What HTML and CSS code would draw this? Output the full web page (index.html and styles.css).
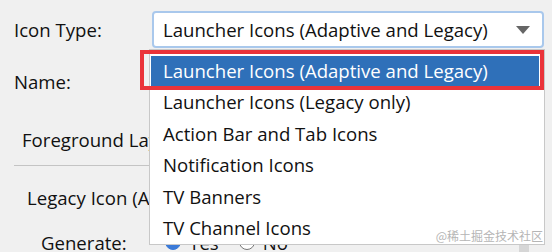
FILE: index.html
```html
<!DOCTYPE html>
<html lang="en">
<head>
    <meta charset="UTF-8">
    <title>Icon Type</title>
    <link rel="stylesheet" href="styles.css">
</head>
<body>

<div class="form">
    <div class="row row-type">
        <span class="label">Icon Type:</span>
        <div class="combo">
            <span class="combo-text">Launcher Icons (Adaptive and Legacy)</span>
            <span class="arrow"></span>
        </div>
    </div>
    <div class="row row-name">
        <span class="label">Name:</span>
    </div>
    <div class="tab">Foreground Layer</div>
    <div class="divider"></div>
    <div class="section">Legacy Icon (API &le; 25)</div>
    <div class="row row-generate">
        <span class="label">Generate:</span>
        <span class="radio checked"></span><span class="radio-label">Yes</span>
        <span class="radio"></span><span class="radio-label">No</span>
    </div>
</div>

<ul class="popup">
    <li class="item selected">Launcher Icons (Adaptive and Legacy)</li>
    <li class="item">Launcher Icons (Legacy only)</li>
    <li class="item">Action Bar and Tab Icons</li>
    <li class="item">Notification Icons</li>
    <li class="item">TV Banners</li>
    <li class="item">TV Channel Icons</li>
</ul>

<div class="highlight"></div>
<div class="scroll-thumb"></div>
<div class="watermark">@稀土掘金技术社区</div>

</body>
</html>
```

FILE: styles.css
```css
body {
    margin: 0;
    width: 552px;
    height: 252px;
    overflow: hidden;
    background: #f0f0f0;
    font-family: "Open Sans", "Noto Sans CJK SC", sans-serif;
    font-size: 18.6px;
    color: #111;
    position: relative;
}

.form {
    padding: 11px 8px 0 14px;
}

.row {
    display: flex;
    align-items: center;
}

.row-type {
    height: 37px;
}

.label {
    width: 138px;
}

.combo {
    flex: 1;
    height: 33px;
    border: 2px solid #a9c8ec;
    border-radius: 4px;
    background: #fff;
    display: flex;
    align-items: center;
    padding: 0 12px 0 9px;
}

.combo-text {
    flex: 1;
}

.arrow {
    width: 0;
    height: 0;
    border-left: 7px solid transparent;
    border-right: 7px solid transparent;
    border-top: 8px solid #666;
}

.row-name {
    margin-top: 18px;
    height: 30px;
}

.tab {
    margin: 29px 0 0 8px;
    height: 30px;
    line-height: 30px;
}

.divider {
    margin-top: 10px;
    width: 140px;
    border-top: 1px solid #c4c4c4;
}

.section {
    margin: 17px 0 0 13px;
    height: 30px;
    line-height: 30px;
}

.row-generate {
    margin: 14px 0 0 27px;
    height: 30px;
}

.row-generate .label {
    width: 124px;
}

.radio {
    width: 14px;
    height: 14px;
    border-radius: 50%;
    border: 1px solid #777;
    background: #fff;
    margin-right: 8px;
}

.radio.checked {
    background: #3b7ad8;
    border-color: #3b7ad8;
}

.radio-label {
    margin-right: 20px;
}

.popup {
    position: absolute;
    left: 149px;
    top: 49px;
    width: 396px;
    height: 196px;
    box-sizing: border-box;
    margin: 0;
    padding: 5px 0 0;
    list-style: none;
    background: #fff;
    border: 1px solid #c8c8c8;
}

.item {
    height: 31.5px;
    line-height: 31px;
    padding-left: 13px;
}

.item.selected {
    margin: 1px 5px 0 1px;
    height: 30px;
    line-height: 30px;
    padding-left: 12px;
    background: #2f70b9;
    color: #fff;
}

.highlight {
    position: absolute;
    left: 140px;
    top: 50px;
    width: 396px;
    height: 32px;
    border: 4px solid #ea3339;
}

.scroll-thumb {
    position: absolute;
    left: 519px;
    top: 245px;
    width: 10px;
    height: 7px;
    background: #d6d6d6;
}

.watermark {
    position: absolute;
    right: 9px;
    bottom: 8px;
    font-size: 12px;
    color: #b5b5b5;
    font-family: "Noto Sans CJK SC", sans-serif;
}
```
